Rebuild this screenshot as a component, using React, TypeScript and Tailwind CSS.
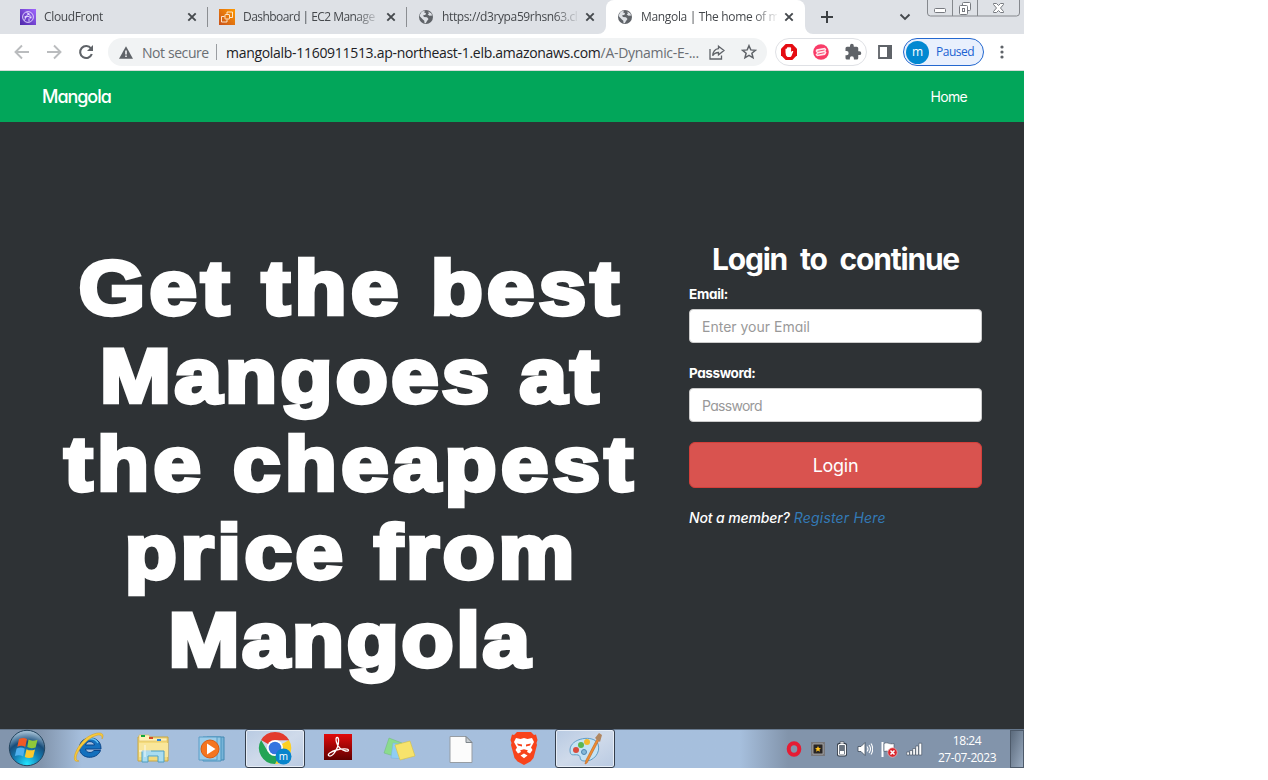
import type { ReactNode } from "react";

const uiFont = "font-['Open_Sans','Noto_Sans',sans-serif]";
const siteFont = "font-['Inter','Open_Sans',sans-serif] [font-feature-settings:'cv11']";

function CloudFrontIcon() {
  return (
    <svg width="16" height="16" viewBox="0 0 16 16" className="shrink-0">
      <defs>
        <linearGradient id="cf" x1="0" y1="1" x2="1" y2="0">
          <stop offset="0" stopColor="#4d27a8" />
          <stop offset="1" stopColor="#a166ff" />
        </linearGradient>
      </defs>
      <rect width="16" height="16" fill="url(#cf)" />
      <g fill="none" stroke="#e6dcff" strokeWidth="0.9">
        <circle cx="8" cy="8" r="5.4" />
        <path d="M4.500 11.500 6 7.500 8.500 5l2.500 2.500M6 7.500l3.500 0M8.500 5 6.500 3M9 12.500V9.500" />
      </g>
      <g fill="#e6dcff">
        <circle cx="8.500" cy="5" r="1.100" />
        <circle cx="5.500" cy="8" r="1.100" />
        <circle cx="10.500" cy="8.500" r="1.100" />
      </g>
    </svg>
  );
}

function Ec2Icon() {
  return (
    <svg width="16" height="16" viewBox="0 0 16 16" className="shrink-0">
      <defs>
        <linearGradient id="ec2" x1="0" y1="1" x2="1" y2="0">
          <stop offset="0" stopColor="#c8511b" />
          <stop offset="1" stopColor="#ff9900" />
        </linearGradient>
      </defs>
      <rect width="16" height="16" fill="url(#ec2)" />
      <g fill="none" stroke="#fff0dc" strokeWidth="0.900">
        <rect x="6" y="5.500" width="4.500" height="4.500" rx="0.500" />
        <path d="M8 5V3h5.500v5.500h-2.500M5.500 7.500h-3V13H8v-2.500" />
      </g>
    </svg>
  );
}

function GlobeIcon() {
  return (
    <svg width="16" height="16" viewBox="0 0 16 16" className="shrink-0">
      <circle cx="8" cy="8" r="7" fill="#5f6368" />
      <path d="M7.200 1.800 6 3.200l2 1-.5 1.600-2.500.7 1 1.500 3 .2 1.500 1.800-1.500 2-1.200 2.200-1.300-.2-.2-2.300-1.700-1.500L2 7.500 1.800 6l2-3.500ZM10 2.500l1 1.700-1.300 1.300 1.800 1.200 2.700-.2-1-2.300Z" fill="#dee1e6" />
    </svg>
  );
}

function CloseIcon() {
  return (
    <svg width="16" height="16" viewBox="0 0 16 16" className="shrink-0">
      <path d="m4.300 4.300 7.400 7.400m0-7.400-7.400 7.400" stroke="#45494d" strokeWidth="1.900" />
    </svg>
  );
}

function Tab({ icon, title, active = false, divider = false, track }: { icon: ReactNode; title: string; active?: boolean; divider?: boolean; track: string }) {
  return (
    <div className={`relative flex h-[34px] w-[199px] shrink-0 items-center pl-[11px] ${active ? "rounded-t-lg bg-white" : ""}`}>
      {icon}
      <span className={`ml-2 w-[136px] whitespace-nowrap text-[12px] text-[#45484c] [mask-image:linear-gradient(to_right,#000_112px,transparent_138px)] ${track}`}>{title}</span>
      <span className="ml-1 flex">
        <CloseIcon />
      </span>
      {divider && <span className="absolute top-[7px] right-0 h-5 w-px bg-[#8b8e92]" />}
      {active && (
        <>
          <svg className="absolute bottom-0 -left-2" width="8" height="8">
            <path d="M8 0v8H0a8 8 0 0 0 8-8" fill="#fff" />
          </svg>
          <svg className="absolute -right-2 bottom-0" width="8" height="8">
            <path d="M0 0v8h8a8 8 0 0 1-8-8" fill="#fff" />
          </svg>
        </>
      )}
    </div>
  );
}

function WindowButtons() {
  return (
    <svg width="93" height="17" viewBox="0 0 93 17" fill="none" stroke="#85888d" className="self-start">
      <path d="M.5 0v13a3 3 0 0 0 3 3h86a3 3 0 0 0 3-3V0M25.500 0v16M50.500 0v16" />
      <rect x="7.500" y="8.500" width="11" height="4" rx="1" fill="#fff" stroke="#777a80" />
      <rect x="35.500" y="2.500" width="8" height="8" rx="1" fill="#fff" stroke="#777a80" />
      <rect x="32.500" y="5.500" width="8" height="9" rx="1" fill="#fff" stroke="#777a80" />
      <rect x="35.500" y="8.500" width="2" height="3" stroke="#777a80" />
      <path d="M66.500 3.500h3l2 2 2-2h3v1L73.500 8l3 3.500v1h-3l-2-2-2 2h-3v-1l3-3.500-3-3.500Z" fill="#fff" stroke="#777a80" />
    </svg>
  );
}

function TabStrip() {
  return (
    <div className="flex h-[34px] items-center bg-[#dee1e6] pl-[9px]">
      <Tab icon={<CloudFrontIcon />} title="CloudFront" divider track="tracking-[-0.35px]" />
      <Tab icon={<Ec2Icon />} title="Dashboard | EC2 Manage" divider track="tracking-[-0.55px]" />
      <Tab icon={<GlobeIcon />} title="https://d3rypa59rhsn63.cl" track="tracking-[-0.37px]" />
      <Tab icon={<GlobeIcon />} title="Mangola | The home of m" active track="tracking-[-0.33px]" />
      <svg width="14" height="14" viewBox="0 0 14 14" className="ml-[15px]">
        <path d="M7 1v12M1 7h12" stroke="#3c4043" strokeWidth="2" />
      </svg>
      <svg width="12" height="8" viewBox="0 0 12 8" className="ml-[65px]">
        <path d="m1.500 1.500 4.500 4.500 4.500-4.500" fill="none" stroke="#45494d" strokeWidth="1.900" />
      </svg>
      <div className="ml-auto flex self-start pr-1">
        <WindowButtons />
      </div>
    </div>
  );
}

function Toolbar() {
  return (
    <div className="flex h-9 items-center bg-white pl-[6px]">
      <div className="flex w-24 shrink-0">
        <svg width="32" height="28" viewBox="0 0 32 28" fill="none" stroke="#babcbe" strokeWidth="1.900">
          <path d="M23 14H10M16 7.500 9.500 14l6.500 6.500" />
        </svg>
        <svg width="32" height="28" viewBox="0 0 32 28" fill="none" stroke="#babcbe" strokeWidth="1.900">
          <path d="M9 14h13M16 7.500l6.500 6.500-6.500 6.500" />
        </svg>
        <svg width="32" height="28" viewBox="0 0 32 28" fill="none">
          <path d="M21 10.500A6 6 0 1 0 21.800 16" stroke="#5f6368" strokeWidth="2.100" />
          <path d="M23 7v6h-6Z" fill="#5f6368" />
        </svg>
      </div>
      <div className="ml-[6px] flex h-7 w-[659px] shrink-0 items-center rounded-full bg-[#f1f3f4] pl-[11px] text-[14px]">
        <svg width="14" height="13" viewBox="0 0 14 13" className="shrink-0">
          <path d="M7 .3 14 12.700H0Z" fill="#5f6368" />
          <path d="M7 4.500v4M7 9.500v1.500" stroke="#fff" strokeWidth="1.500" />
        </svg>
        <span className="ml-[9px] w-[74px] whitespace-nowrap tracking-[-0.420px] text-[#6a6e73]">Not secure</span>
        <span className="h-4 w-px bg-[#9a9da1]" />
        <span className="ml-[9px] w-[480px] whitespace-nowrap text-[#202124] tracking-[-0.300px]">
          mangolalb-1160911513.ap-northeast-1.elb.amazonaws.com<span className="text-[#6a6e73]">/A-Dynamic-E-...</span>
        </span>
        <svg width="16" height="16" viewBox="0 0 16 16" fill="none" stroke="#5f6368" strokeWidth="1.300" className="ml-[3px] shrink-0">
          <path d="M1 5v10h11.500v-3.500M9.500 2.200 15 6.500l-5.500 4.300V8.500C6.500 8.500 5 9.500 3.700 11.700 4 8 6 5 9.500 4.600Z" />
        </svg>
        <svg width="16" height="16" viewBox="0 0 16 16" fill="none" stroke="#5f6368" strokeWidth="1.500" className="ml-4 shrink-0">
          <path d="m8 1.700 1.800 4.200 4.600.4-3.500 3 1.100 4.500L8 11.400l-4 2.400 1.100-4.500-3.500-3 4.600-.4Z" />
        </svg>
      </div>
      <div className="ml-2 flex h-7 w-[92px] shrink-0 items-center justify-between rounded-full border border-[#dfe1e5] pr-[4px] pl-[5px]">
        <svg width="16" height="16" viewBox="0 0 16 16">
          <path d="M4.700 0h6.600L16 4.700v6.600L11.300 16H4.700L0 11.300V4.700Z" fill="#e50c12" />
          <path d="M4.500 8.500V5.200c0-1 1.400-1 1.400 0V4c0-1 1.400-1 1.400 0v-.5c0-1 1.400-1 1.400 0V4c0-1 1.400-1 1.400 0v4l1-.9c.8-.5 1.500.2 1 .9L10.500 12 9.500 13h-3L5 11.500Z" fill="#fff" />
        </svg>
        <svg width="16" height="16" viewBox="0 0 16 16">
          <circle cx="8" cy="8" r="7.800" fill="#f93c68" />
          <path d="M3.500 5.200 12 3.800l1.300 1.700-.8 1.500 1 1.500-1.500 2.500L4 12.300l-1.500-1.800L4 9 2.500 7Z" fill="#ffe9ee" />
          <path d="m4.500 7.300 7-1.300M4.500 10.200l7-1.500" stroke="#f93c68" strokeWidth="0.900" />
        </svg>
        <svg width="18" height="18" viewBox="0 0 24 24" fill="#5f6368">
          <path d="M20.500 11H19V7a2 2 0 0 0-2-2h-4V3.500a2.500 2.500 0 0 0-5 0V5H4a2 2 0 0 0-2 2v3.800h1.500a2.700 2.700 0 0 1 0 5.400H2V20a2 2 0 0 0 2 2h3.800v-1.500a2.700 2.700 0 0 1 5.400 0V22H17a2 2 0 0 0 2-2v-4h1.500a2.500 2.500 0 0 0 0-5Z" />
        </svg>
      </div>
      <svg width="14" height="14" viewBox="0 0 14 14" className="ml-[11px] shrink-0">
        <path d="M1 1h12v12H1Z" fill="none" stroke="#5f6368" strokeWidth="1.800" />
        <path d="M9 0h5v14H9Z" fill="#5f6368" />
      </svg>
      <div className="ml-[11px] flex h-7 w-[81px] shrink-0 items-center rounded-full border border-[#2468cf] bg-[#e9f0fd] pl-[2px]">
        <span className="flex size-[23px] shrink-0 items-center justify-center rounded-full bg-[#0288d1] pb-px text-[12px] text-white">m</span>
        <span className="ml-[7px] text-[12px] tracking-[-0.500px] text-[#1a62d2]">Paused</span>
      </div>
      <svg width="4" height="16" viewBox="0 0 4 16" fill="#5f6368" className="ml-4">
        <circle cx="2" cy="3" r="1.600" />
        <circle cx="2" cy="8" r="1.600" />
        <circle cx="2" cy="13" r="1.600" />
      </svg>
    </div>
  );
}

const headline = [
  { text: "Get the best", track: "tracking-[3.9px]" },
  { text: "Mangoes at", track: "tracking-[3px]" },
  { text: "the cheapest", track: "tracking-[3.9px]" },
  { text: "price from", track: "tracking-[3.3px]" },
  { text: "Mangola", track: "tracking-[2.4px]" },
];

function Site() {
  return (
    <div className={`flex h-[658px] flex-col border-t border-[#d5dcd8] bg-[#2e3235] text-white ${siteFont}`}>
      <nav className="flex h-[51px] shrink-0 items-center justify-between bg-[#02a65a] pr-[57px] pb-px pl-[42px]">
        <span className="text-[18px] font-medium tracking-[-1.050px]">Mangola</span>
        <span className="text-[14px] tracking-[-0.700px]">Home</span>
      </nav>
      <main className="flex">
        <h1 className="mt-[122px] ml-[41px] flex w-[620px] flex-col items-center font-['Liberation_Sans',sans-serif] text-[76px] leading-[88px] font-bold [-webkit-text-stroke:4.300px_#fff]">
          {headline.map((line) => (
            <span key={line.text} className={`scale-x-[1.120] whitespace-nowrap ${line.track}`}>
              {line.text}
            </span>
          ))}
        </h1>
        <form className="mt-[117px] ml-7 flex w-[293px] flex-col" onSubmit={(e) => e.preventDefault()}>
          <h2 className="text-center text-[30px] leading-10 font-bold tracking-[-1.200px] whitespace-nowrap [word-spacing:7px]">Login to continue</h2>
          <label className="mt-[5px] text-[13.500px] leading-5 font-bold tracking-[-0.3px]">Email:</label>
          <input className="mt-[5px] h-[34px] rounded border border-[#ccc] bg-white px-3 text-[14px] placeholder:text-[#999]" placeholder="Enter your Email" />
          <label className="mt-5 text-[13.500px] leading-5 font-bold tracking-[-0.4px]">Password:</label>
          <input type="password" className="mt-[5px] h-[34px] rounded border border-[#ccc] bg-white px-3 text-[14px] tracking-[-0.700px] placeholder:text-[#999]" placeholder="Password" />
          <button className="mt-5 h-[46px] rounded-md border border-[#d43f3a] bg-[#d9534f] text-[18px] tracking-[-0.3px]">Login</button>
          <p className="mt-5 text-[14px] leading-5 whitespace-nowrap italic">
            <span className="font-medium tracking-[-0.130px]">Not a member?</span> <a className="tracking-[0.180px] text-[#337ab7]">Register Here</a>
          </p>
        </form>
      </main>
    </div>
  );
}

function TaskItem({ children, active = false }: { children: ReactNode; active?: boolean }) {
  return (
    <div className={`flex h-[39px] w-[60px] shrink-0 items-center justify-center ${active ? "rounded-[3px] border border-[#343e4c] bg-linear-to-br from-[#b8cae2] via-[#cfdaea] to-[#b9cae2] shadow-[inset_0_0_0_1px_#e6edf6]" : ""}`}>{children}</div>
  );
}

function Taskbar() {
  return (
    <div className="flex h-[39px] items-center bg-linear-to-r from-[#8295ad] from-[4%] via-[#a6bfdd] via-[8%] to-[#a6bfdd] shadow-[inset_0_1px_0_#66788d]">
      <div className="flex w-[59px] shrink-0 justify-center pr-[5px] pb-px">
        <svg width="38" height="38" viewBox="0 0 38 38">
          <defs>
            <radialGradient id="orb" cx="0.500" cy="0.950" r="0.900">
              <stop offset="0" stopColor="#23e5ff" />
              <stop offset="0.400" stopColor="#1482b8" />
              <stop offset="0.700" stopColor="#174d7b" />
              <stop offset="1" stopColor="#9dbad0" />
            </radialGradient>
          </defs>
          <circle cx="19" cy="19" r="17.700" fill="url(#orb)" stroke="#24455f" />
          <path d="M11 10c3-1.500 5.500-1.500 8 0l-1.700 8c-2.500-1.500-5.300-1.500-8-.3Z" fill="#ef5a25" />
          <path d="M20.500 10.500c2.500 1.500 5.500 1.500 9 .2l-1.900 7.700c-3 1.200-6 1-8.300-.3Z" fill="#8fc93a" />
          <path d="M8.600 19.500c3-1.200 5.500-1.200 8.200.2l-1.700 7.700c-2.500-1.500-5.500-1.500-8.200-.3Z" fill="#4fb0ee" />
          <path d="M18.500 20.200c2.500 1.500 5.500 1.500 8.500.3l-1.900 7.700c-3 1.200-5.800 1-8.300-.3Z" fill="#fdc92e" />
        </svg>
      </div>
      <div className="flex shrink-0 gap-[2px]">
        <TaskItem>
          <svg width="34" height="34" viewBox="0 0 34 34" className="-mt-px">
            <path d="M29 18H13.500c.4 3.500 5.500 5 8.500 1.500h6.500C25 29 7.500 29 7.500 16.500 7.500 4 29.500 3 29 18ZM13.500 14h9c-1-4.500-8-4.500-9 0Z" fill="#1470bd" stroke="#0a4589" />
            <path d="M10.500 12C14 6.500 23 6 26 12" fill="none" stroke="#66c3f2" strokeWidth="1.500" />
            <path d="M7 30C-2 33 3 17 13 8 21 1 35-1 30 8c1-7-8-4-15 2C7 17 0 29 7 30Z" fill="#f8cb3c" stroke="#d89b12" strokeWidth="0.500" />
          </svg>
        </TaskItem>
        <TaskItem>
          <svg width="34" height="32" viewBox="0 0 34 32" className="ml-1">
            <path d="M2 4h30v24H2Z" fill="#f3da7c" stroke="#c9a641" />
            <path d="M3 2h10l1 3h17v3H3Z" fill="#fff1b8" stroke="#d9ba5b" strokeWidth="0.600" />
            <path d="M5 2h4v2H5Z" fill="#12a83b" />
            <path d="M13 4h4v2h-4Z" fill="#d64624" />
            <path d="M21 6h4v2h-4Z" fill="#2581dd" />
            <path d="M3 10h29v14H3Z" fill="#f9e69a" />
            <path d="M6 18h22v11h-6v-6H12v6H6Z" fill="#a9dcf0" stroke="#4c9ec2" />
            <path d="M9 12v12M3 18h12" stroke="#fff" strokeWidth="0.800" />
          </svg>
        </TaskItem>
        <TaskItem>
          <svg width="30" height="28" viewBox="0 0 30 28">
            <path d="M9 2h17v23H9Z" fill="#77b4d8" stroke="#4388b2" />
            <path d="M5 2h18v24H5Z" fill="#93c8e5" stroke="#4a93bd" />
            <path d="M1 2h18v23H1Z" fill="#9ccdea" stroke="#5a9dc6" />
            <circle cx="12" cy="14" r="9" fill="#f5751f" stroke="#d95c12" />
            <path d="m9 8.500 8.500 5.500L9 19.500Z" fill="#fff" />
          </svg>
        </TaskItem>
        <TaskItem active>
          <svg width="34" height="34" viewBox="0 0 34 34" className="-mt-px">
            <path d="M17 17 3.100 9a16 16 0 0 1 27.800 0H17Z" fill="#e33b2e" />
            <path d="M17 17 31 9a16 16 0 0 1-14 24l7-12Z" fill="#fdd023" />
            <path d="M17 17 24 21l-7 12A16 16 0 0 1 3.100 9l7 12Z" fill="#23a455" />
            <path d="M17 9h14" stroke="#e33b2e" strokeWidth="0.600" />
            <circle cx="17" cy="17" r="8" fill="#fff" />
            <circle cx="17" cy="17" r="6.300" fill="#3474e0" />
            <circle cx="25.500" cy="25.500" r="8" fill="#0784cc" />
            <text x="25.500" y="29" textAnchor="middle" fontSize="10" fill="#fff" fontFamily="Open Sans, sans-serif">m</text>
          </svg>
        </TaskItem>
        <TaskItem>
          <svg width="28" height="28" viewBox="0 0 28 28" className="-mt-1 ml-px">
            <defs>
              <linearGradient id="pdf" x2="0" y2="1">
                <stop offset="0" stopColor="#e20b0b" />
                <stop offset="1" stopColor="#5f0000" />
              </linearGradient>
            </defs>
            <path d="M0 1h28v26H0Z" fill="url(#pdf)" />
            <path d="M4.500 22.500c-1-1.500 2.500-4 8-5.500 6-1.600 12-1.500 12 .2 0 2-5 .8-8.500-2C12.500 12.500 11 5 13 4.500s2 5 .5 9.500-6 11-9 8.500Z" fill="none" stroke="#fff" strokeWidth="1.300" />
          </svg>
        </TaskItem>
        <TaskItem>
          <svg width="34" height="28" viewBox="0 0 34 28" className="mt-[2px] ml-px">
            <path d="m6 2 13 5-5 14L1 17Z" fill="#8bdb8d" stroke="#6ebb78" strokeWidth="0.500" />
            <path d="m10 7 14 2-2 14-14-1Z" fill="#8fcdf3" stroke="#79b3dc" strokeWidth="0.500" />
            <path d="m12 9 15-4 5 15-15 4Z" fill="#f7e36b" stroke="#d3bf45" strokeWidth="0.600" />
          </svg>
        </TaskItem>
        <TaskItem>
          <svg width="24" height="30" viewBox="0 0 24 30" className="mt-[2px]">
            <path d="M1 1.500h16l6 6v20H1Z" fill="#fcfcfc" stroke="#979da3" />
            <path d="M17 1.500v6h6Z" fill="#c8cdd1" stroke="#7e858b" />
          </svg>
        </TaskItem>
        <TaskItem>
          <svg width="28" height="34" viewBox="0 0 28 34" className="-mt-[2px] ml-px">
            <path d="M7 1h14l3 3 2-.5L27.500 9l-1 3 .5 2-3.500 13-3 3.500-6.500 3.500-6.500-3.500L4.500 27 1 14l.5-2-1-3L2 3.500 4 4Z" fill="#f8431b" />
            <path d="m6 7 4.500 1L14 7l3.500 1L22 7l2 4-3 5.500 1.500 2.500-2.500 3.500-3-1.500.8-1.800-3.800-1-3.800 1L11 21l-3 1.500L5.500 19 7 16.500 4 11Z" fill="#fff" />
            <path d="m7 12.500 5 1v2l-4-1ZM21 12.500l-5 1v2l4-1Z" fill="#f8431b" />
            <path d="m10.500 24.500 3.500-2 3.500 2-3.500 2.800Z" fill="#fff" />
          </svg>
        </TaskItem>
        <TaskItem active>
          <svg width="34" height="34" viewBox="0 0 34 34">
            <path d="M2 18c0-12 24-16 28-6 3 8-4 18-14 17-6-.5-2-5-6-6s-8 2-8-5Z" fill="#c5e3f4" stroke="#5e9cc5" />
            <circle cx="8" cy="18" r="3" fill="#da4b3c" />
            <circle cx="13" cy="13" r="3" fill="#5bb650" />
            <circle cx="19" cy="10" r="3" fill="#f3b92c" />
            <circle cx="16" cy="20" r="2.500" fill="#85b9d8" stroke="#4e87b1" />
            <path d="m29 7 2 1-12 23-2 1 1-4Z" fill="#ef8c32" stroke="#bd651c" strokeWidth="0.600" />
            <path d="m27 6 4-5 3 2-2 7Z" fill="#b08660" />
          </svg>
        </TaskItem>
      </div>
      <div className="ml-auto flex h-[38px] w-[284px] shrink-0 items-center self-end bg-linear-to-r from-[#a6bfdd] to-[#8294ab] to-[17%] pl-[46px]">
        <svg width="16" height="16" viewBox="0 0 16 16">
          <ellipse cx="8" cy="8" rx="5.300" ry="5.700" fill="none" stroke="#e51c34" strokeWidth="4" />
        </svg>
        <svg width="14" height="14" viewBox="0 0 14 14" className="ml-[9px]">
          <path d="M0 0h14v14H0Z" fill="#77777a" />
          <path d="M2 2h10v10H2Z" fill="#282525" stroke="#b4b4b4" strokeWidth="0.800" />
          <path d="m7 4 .9 2 2.100.2-1.600 1.400.5 2.100L7 8.600 5.100 9.700l.5-2.100L4 6.200 6.100 6Z" fill="#ffc21c" />
        </svg>
        <svg width="12" height="16" viewBox="0 0 12 16" className="ml-[11px]">
          <rect x="1" y="2" width="10" height="13.500" rx="2" fill="#333c48" />
          <path d="M4 .8h4V3H4Z" fill="#fff" stroke="#333c48" strokeWidth="0.700" />
          <rect x="2.500" y="3.500" width="7" height="10.500" rx="1" fill="#69737f" stroke="#fff" strokeWidth="1.200" />
          <path d="M4 10h4v3H4Z" fill="#fff" />
        </svg>
        <svg width="16" height="16" viewBox="0 0 16 16" className="ml-[9px]">
          <path d="M1 5.500h3L8 1.500v13l-4-4H1Z" fill="#fff" stroke="#3f4b5a" strokeWidth="0.800" />
          <path d="M10 5.500q2 2.500 0 5m2-6.500q3 4 0 8m2-9.500q3.500 5.500 0 11" fill="none" stroke="#fff" strokeWidth="1.100" />
        </svg>
        <svg width="17" height="17" viewBox="0 0 17 17" className="ml-[8px]">
          <path d="M1.500 1v15" stroke="#fff" strokeWidth="2" />
          <path d="M3 2.500c4-2 5 1.500 10 0v8c-4 1.500-6-1.500-10 0Z" fill="#fff" stroke="#3f4b5a" strokeWidth="0.600" />
          <circle cx="11.500" cy="11.500" r="4.700" fill="#d9252c" stroke="#f5c9c9" strokeWidth="0.600" />
          <path d="m9.500 9.500 4 4m0-4-4 4" stroke="#fff" strokeWidth="1.500" />
        </svg>
        <svg width="17" height="14" viewBox="0 0 17 14" className="ml-[8px]" fill="#fff" stroke="#3f4b5a" strokeWidth="0.600">
          <path d="M.8 10h2.600v3H.8ZM3.800 8.500h2.600V13H3.800ZM6.800 6.500h2.600V13H6.800ZM9.800 4h2.600v9H9.800ZM12.900 1.200h2.800V13h-2.800Z" />
        </svg>
        <div className="ml-[11px] w-[66px] text-center text-[12px] leading-[17px] tracking-[-0.450px] whitespace-nowrap text-white">
          <div>18:24</div>
          <div>27-07-2023</div>
        </div>
        <div className="ml-auto h-[38px] w-[14px] border border-[#4d5a6a] bg-linear-to-br from-[#5b6a7c] to-[#9aabc0]" />
      </div>
    </div>
  );
}

export default function App() {
  return (
    <div className="h-[780px] w-[1268px] overflow-hidden bg-white">
      <div className={`flex h-[768px] w-[1024px] flex-col overflow-hidden ${uiFont}`}>
        <TabStrip />
        <Toolbar />
        <Site />
        <div className="h-px shrink-0 bg-[#2e3235]" />
        <Taskbar />
      </div>
    </div>
  );
}
